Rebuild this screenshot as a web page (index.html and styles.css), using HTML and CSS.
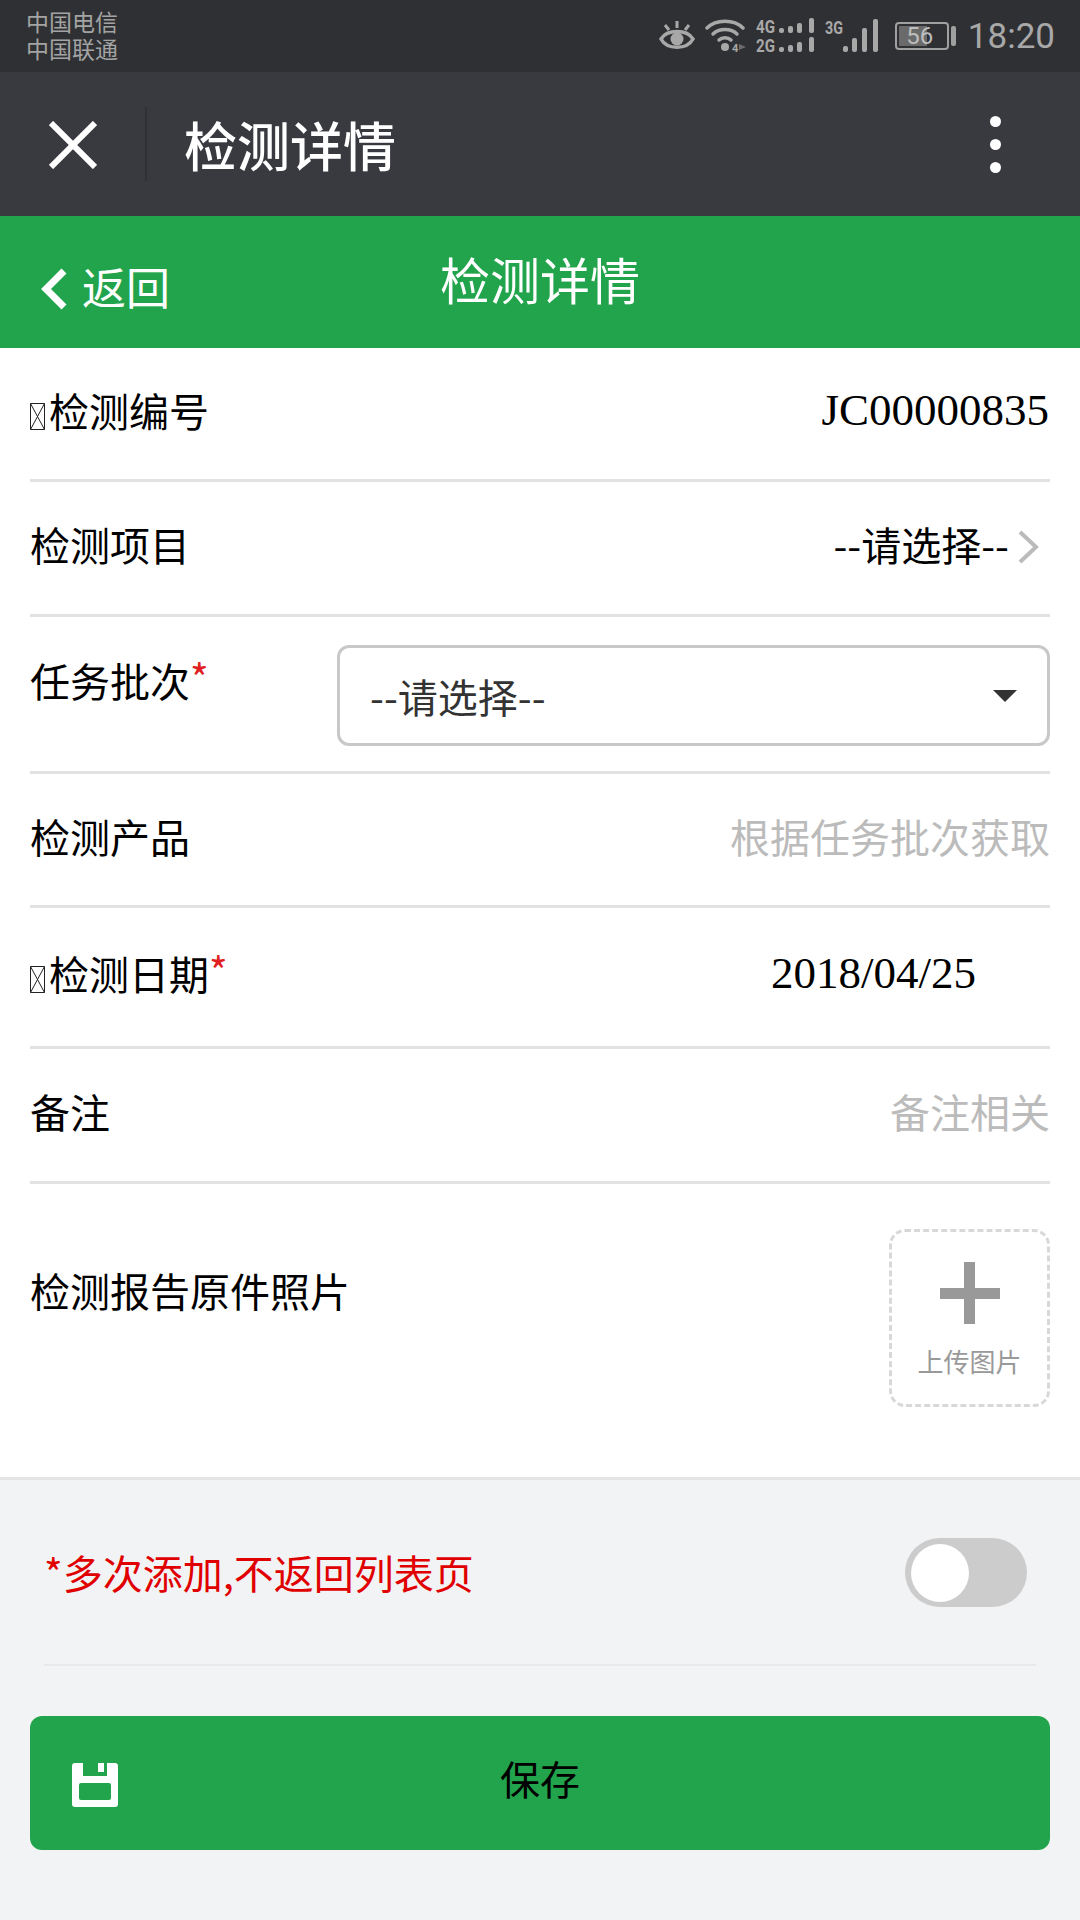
FILE: index.html
```html
<!DOCTYPE html>
<html lang="zh-CN">
<head>
    <meta charset="UTF-8">
    <title>检测详情</title>
    <link rel="stylesheet" href="styles.css">
</head>
<body>
<div class="status">
    <div class="carrier">
        <div>中国电信</div>
        <div>中国联通</div>
    </div>
    <div class="status-icons">
        <svg class="i-eye" width="36" height="34" viewBox="0 0 36 34" fill="none" stroke="#a8a8a8">
            <path d="M2 20C8 10 28 10 34 20C28 31 8 31 2 20Z" stroke-width="3.5"/>
            <circle cx="18" cy="20" r="6.5" fill="#a8a8a8" stroke="none"/>
            <path d="M18 2V9M6 6L10 11M30 6L26 11" stroke-width="3"/>
        </svg>
        <svg class="i-wifi" width="42" height="36" viewBox="0 0 42 36" fill="none" stroke="#a8a8a8" stroke-linecap="round">
            <path d="M2 11C11 2 29 2 38 11" stroke-width="3.5"/>
            <path d="M8 17C14 11 26 11 32 17" stroke-width="3.5"/>
            <path d="M14 23C17 20 23 20 26 23" stroke-width="3.5"/>
            <circle cx="20" cy="30" r="4" fill="#a8a8a8" stroke="none"/>
            <text class="tiny" x="27" y="35" font-size="11" fill="#a8a8a8" stroke="none">4</text>
            <path d="M34 27L41 30L34 33Z" fill="#6c6c6c" stroke="none"/>
        </svg>
        <svg class="i-net" width="59" height="36" viewBox="0 0 59 36" fill="#a8a8a8">
            <text class="tiny" x="0" y="16" font-size="18" textLength="19" lengthAdjust="spacingAndGlyphs">4G</text>
            <text class="tiny" x="0" y="35" font-size="18" textLength="19" lengthAdjust="spacingAndGlyphs">2G</text>
            <rect x="23" y="11" width="5" height="5" rx="2"/><rect x="32" y="9" width="5" height="7" rx="2"/><rect x="41" y="6" width="5" height="10" rx="2"/><rect x="53" y="1" width="5" height="15" rx="2"/>
            <rect x="23" y="30" width="5" height="5" rx="2"/><rect x="32" y="28" width="5" height="7" rx="2"/><rect x="41" y="25" width="5" height="10" rx="2"/><rect x="53" y="20" width="5" height="15" rx="2"/>
        </svg>
        <svg class="i-sig" width="54" height="36" viewBox="0 0 54 36" fill="#a8a8a8">
            <text class="tiny" x="0" y="17" font-size="18" textLength="18" lengthAdjust="spacingAndGlyphs">3G</text>
            <rect x="18" y="29" width="5" height="6" rx="2"/><rect x="27" y="21" width="5" height="14" rx="2"/><rect x="37" y="11" width="5" height="24" rx="2"/><rect x="48" y="2" width="5" height="33" rx="2"/>
        </svg>
        <div class="battery">
            <div class="battery-body"><span class="battery-fill"></span><span class="battery-num">56</span></div>
            <span class="battery-nub"></span>
        </div>
        <span class="time">18:20</span>
    </div>
</div>

<div class="nav">
    <svg class="nav-close" width="48" height="48" viewBox="0 0 48 48" stroke="#fff" stroke-width="6"><path d="M2 2L46 46M46 2L2 46"/></svg>
    <span class="nav-line"></span>
    <span class="nav-title">检测详情</span>
    <div class="nav-more"><i></i><i></i><i></i></div>
</div>

<div class="header">
    <a class="back">
        <svg width="28" height="42" viewBox="0 0 28 42" fill="none" stroke="#fff" stroke-width="7"><path d="M24 3L6 21L24 39"/></svg>
        <span>返回</span>
    </a>
    <span class="header-title">检测详情</span>
</div>

<div class="form">
    <div class="row row1">
        <label class="icon-label">
            <svg class="tofu" width="15" height="27" viewBox="0 0 15 27" fill="none" stroke="#222" stroke-width="1"><path d="M.5 .5H14.5V26.5H.5ZM.5 .5L14.5 26.5M14.5 .5L.5 26.5"/></svg>检测编号
        </label>
        <span class="serif-val">JC00000835</span>
    </div>
    <div class="row row2">
        <label>检测项目</label>
        <span class="pick">--请选择--<svg width="22" height="36" viewBox="0 0 22 36" fill="none" stroke="#bbb" stroke-width="4"><path d="M3 3L19 18L3 33"/></svg></span>
    </div>
    <div class="row row3">
        <label>任务批次<em>*</em></label>
        <div class="select">
            <span>--请选择--</span>
            <i class="caret"></i>
        </div>
    </div>
    <div class="row row4">
        <label>检测产品</label>
        <span class="hint">根据任务批次获取</span>
    </div>
    <div class="row row5">
        <label class="icon-label">
            <svg class="tofu" width="15" height="27" viewBox="0 0 15 27" fill="none" stroke="#222" stroke-width="1"><path d="M.5 .5H14.5V26.5H.5ZM.5 .5L14.5 26.5M14.5 .5L.5 26.5"/></svg>检测日期<em>*</em>
        </label>
        <span class="serif-val date">2018/04/25</span>
    </div>
    <div class="row row6">
        <label>备注</label>
        <span class="hint">备注相关</span>
    </div>
    <div class="row row7">
        <label>检测报告原件照片</label>
        <div class="upload">
            <div class="plus"></div>
            <span>上传图片</span>
        </div>
    </div>
</div>

<div class="foot">
    <div class="again">
        <span>*多次添加,不返回列表页</span>
        <div class="switch"><i></i></div>
    </div>
    <div class="save">
        <svg width="46" height="44" viewBox="0 0 46 44">
            <path fill="#fff" fill-rule="evenodd" d="M3 0H11V13H35V0H43Q46 0 46 3V41Q46 44 43 44H3Q0 44 0 41V3Q0 0 3 0ZM9 20Q7 20 7 22V35Q7 37 9 37H37Q39 37 39 35V22Q39 20 37 20Z"/>
            <rect x="26" y="0" width="6" height="9" fill="#fff"/>
        </svg>
        <span>保存</span>
    </div>
</div>
</body>
</html>
```

FILE: styles.css
```css
*{
    box-sizing: border-box;
}
html,body{
    margin: 0;
    padding: 0;
}
body{
    width: 1080px;
    height: 1920px;
    overflow: hidden;
    background: #f2f3f5;
    font-family: "Noto Sans CJK SC", "Liberation Sans", sans-serif;
    color: #000;
}
i,em{
    font-style: normal;
}

/* status bar */
.status{
    height: 72px;
    background: #2f3033;
    display: flex;
    justify-content: space-between;
    padding: 0 25px 0 26px;
}
.carrier{
    padding-top: 8px;
    font-size: 23px;
    line-height: 27px;
    color: #a3a3a3;
}
.status-icons{
    display: flex;
    align-items: flex-start;
    padding-top: 17px;
}
.tiny{
    font-family: "Roboto", sans-serif;
    font-weight: 700;
}
.i-eye{
    margin-top: 2px;
}
.i-wifi{
    margin-left: 10px;
}
.i-net{
    margin-left: 9px;
}
.i-sig{
    margin-left: 10px;
}
.battery{
    display: flex;
    align-items: center;
    margin: 5px 0 0 16px;
}
.battery-body{
    position: relative;
    width: 54px;
    height: 28px;
    border: 2px solid #a0a0a0;
    border-radius: 4px;
    overflow: hidden;
}
.battery-fill{
    position: absolute;
    left: 2px;
    top: 2px;
    bottom: 2px;
    width: 28px;
    background: #6a6a6a;
}
.battery-num{
    position: relative;
    display: block;
    font: 24px/24px "Roboto", sans-serif;
    text-align: center;
    color: #bdbdbd;
    margin-left: -4px;
}
.battery-nub{
    width: 5px;
    height: 20px;
    margin-left: 2px;
    background: #a0a0a0;
    border-radius: 2px;
}
.time{
    margin: 0 0 0 12px;
    font: 35px/40px "Roboto", sans-serif;
    color: #a8a8a8;
}

/* wechat bar */
.nav{
    height: 144px;
    background: #383a40;
    display: flex;
    align-items: center;
    padding-left: 49px;
    position: relative;
}
.nav-close{
    margin-top: 1px;
}
.nav-line{
    width: 2px;
    height: 74px;
    margin-left: 48px;
    background: #303136;
}
.nav-title{
    margin-left: 37px;
    font-size: 53px;
    font-weight: 500;
    color: #fff;
}
.nav-more{
    position: absolute;
    right: 79px;
    top: 44px;
}
.nav-more i{
    display: block;
    width: 11px;
    height: 11px;
    margin-bottom: 12px;
    border-radius: 50%;
    background: #fff;
}

/* page header */
.header{
    height: 132px;
    background: #22a44c;
    position: relative;
    display: flex;
    justify-content: center;
    align-items: center;
    color: #fff;
}
.header-title{
    font-size: 50px;
    margin-top: -8px;
}
.back{
    position: absolute;
    left: 40px;
    top: 40px;
    display: flex;
    align-items: center;
    font-size: 44px;
    line-height: 60px;
}
.back svg{
    margin: 6px 14px 0 0;
}

/* form */
.form{
    background: #fff;
    padding: 0 30px;
    height: 1132px;
    border-bottom: 3px solid #e2e4e6;
}
.row{
    display: flex;
    justify-content: space-between;
    align-items: center;
    border-bottom: 3px solid #e2e2e2;
    font-size: 40px;
    line-height: 56px;
    padding-bottom: 8px;
}
.row label{
    display: block;
}
.row em{
    color: #e02020;
    position: relative;
    top: -3px;
}
.row1{
    height: 134px;
}
.row2{
    height: 135px;
}
.row3{
    height: 157px;
    align-items: flex-start;
    padding: 0;
}
.row3 label{
    padding-top: 35px;
}
.row4{
    height: 134px;
}
.row5{
    height: 141px;
}
.row6{
    height: 135px;
}
.row7{
    height: 293px;
    border-bottom: 0;
    align-items: flex-start;
    padding: 0;
}
.row7 label{
    padding-top: 78px;
}
.tofu{
    margin-right: 4px;
    vertical-align: -3px;
}
.serif-val{
    font: 45px/56px "Liberation Serif", serif;
    margin-right: 1px;
}
.date{
    margin-right: 74px;
}
.pick{
    display: flex;
    align-items: center;
    margin-right: 11px;
}
.pick svg{
    margin: 6px 0 0 8px;
}
.select{
    width: 713px;
    height: 101px;
    margin-top: 28px;
    padding: 0 30px;
    border: 3px solid #c8c8c8;
    border-radius: 12px;
    display: flex;
    justify-content: space-between;
    align-items: center;
    color: #333;
}
.caret{
    width: 0;
    height: 0;
    border-left: 12px solid transparent;
    border-right: 12px solid transparent;
    border-top: 12px solid #333;
}
.hint{
    color: #bbb;
}
.upload{
    width: 161px;
    height: 178px;
    margin-top: 45px;
    border: 3px dashed #d8d8d8;
    border-radius: 16px;
    display: flex;
    flex-direction: column;
    align-items: center;
    font-size: 26px;
    line-height: 32px;
    color: #999;
}
.plus{
    width: 60px;
    height: 62px;
    margin: 30px 0 21px;
    background: linear-gradient(#999,#999) center/60px 11px no-repeat,
                linear-gradient(#999,#999) center/11px 62px no-repeat;
}

/* footer */
.again{
    height: 186px;
    margin: 0 44px;
    border-bottom: 2px solid #e8e9eb;
    display: flex;
    justify-content: space-between;
    align-items: center;
    padding: 0 9px 0 0;
    font-size: 40px;
    color: #e00000;
}
.switch{
    width: 122px;
    height: 69px;
    border-radius: 35px;
    background: #ccc;
    padding: 6px;
}
.switch i{
    display: block;
    width: 58px;
    height: 58px;
    border-radius: 50%;
    background: #fff;
}
.save{
    height: 134px;
    margin: 50px 30px 0;
    background: #22a44c;
    border-radius: 12px;
    position: relative;
    display: flex;
    justify-content: center;
    align-items: center;
    font-size: 40px;
    padding-bottom: 10px;
}
.save svg{
    position: absolute;
    left: 42px;
    top: 47px;
}
```
